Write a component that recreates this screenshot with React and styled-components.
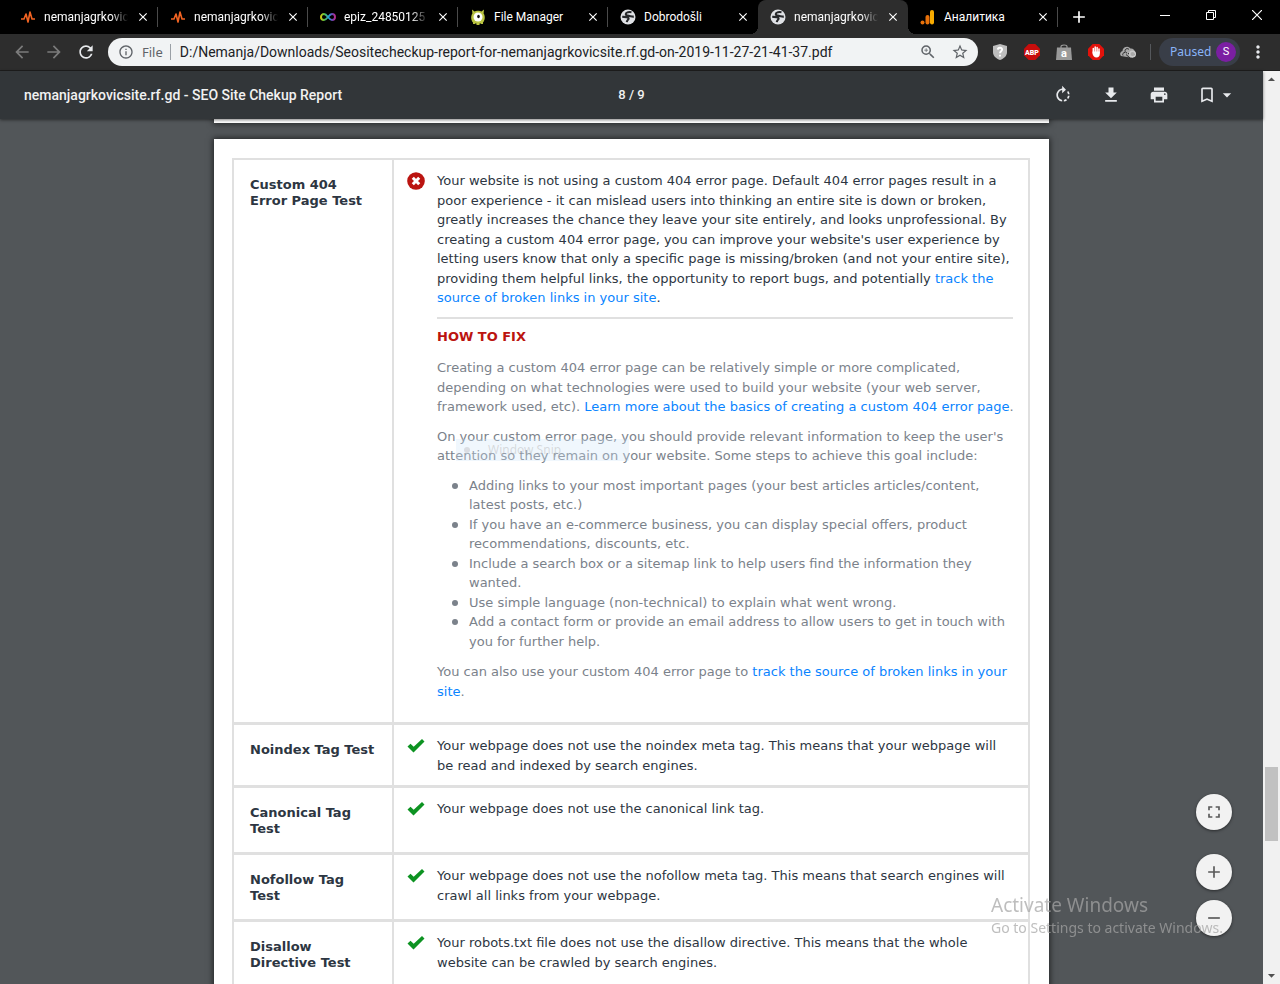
import React from 'react';
import styled, { createGlobalStyle, css } from 'styled-components';
import {
  MdArrowBack, MdArrowForward, MdRefresh, MdInfoOutline, MdZoomIn, MdStarBorder, MdRotateRight,
  MdFileDownload, MdPrint, MdBookmarkBorder, MdArrowDropDown, MdArrowDropUp, MdAdd, MdRemove,
  MdFullscreen, MdMoreVert, MdClose,
} from 'react-icons/md';

const GlobalStyle = createGlobalStyle`
  * { box-sizing: border-box; }
  body { margin: 0; background: #525659; }
  button { border: 0; padding: 0; background: none; font: inherit; color: inherit; cursor: pointer; }
`;

const uiFont = '"Noto Sans", "Open Sans", sans-serif';

const Window = styled.div`
  display: flex;
  flex-direction: column;
  height: 100vh;
  overflow: hidden;
`;

/* Tab strip */
const TabStrip = styled.header`
  display: flex;
  height: 34px;
  flex: none;
  padding-left: 8px;
  background: #000;
  color: #fff;
  font: 12px/16px Roboto, sans-serif;
`;

const Tab = styled.div`
  position: relative;
  display: flex;
  align-items: center;
  flex: 0 1 150px;
  min-width: 0;
  padding: 0 8px 0 12px;
  gap: 8px;

  &::after {
    content: '';
    position: absolute;
    right: 0;
    top: 7px;
    width: 1px;
    height: 20px;
    background: ${(p) => (p.$noDivider ? 'transparent' : '#4a4a4a')};
  }

  ${(p) => p.$active && css`
    background: #2d2d2d;
    border-radius: 8px 8px 0 0;
    &::before, &::after {
      content: '';
      position: absolute;
      top: auto;
      bottom: 0;
      width: 8px;
      height: 8px;
    }
    &::before { left: -8px; background: radial-gradient(circle at 0 0, transparent 8px, #2d2d2d 8px); }
    &::after { right: -8px; background: radial-gradient(circle at 100% 0, transparent 8px, #2d2d2d 8px); }
  `}
`;

const TabTitle = styled.button`
  flex: 1;
  min-width: 0;
  overflow: hidden;
  white-space: nowrap;
  text-align: left;
  mask-image: ${(p) => (p.$fade ? 'linear-gradient(to right, #000 80%, transparent)' : 'none')};
`;

const TabClose = styled.button`
  display: flex;
  width: 14px;
  justify-content: center;
`;

const Favicon = styled.svg`
  width: 16px;
  height: 16px;
  flex: none;
`;

const NewTab = styled.button`
  display: flex;
  align-items: center;
  justify-content: center;
  width: 42px;
`;

const WindowControls = styled.div`
  display: flex;
  height: 29px;
  margin-left: auto;
`;

const WindowButton = styled.button`
  width: 46px;
  svg { display: block; margin: 0 auto; }
`;

/* Address bar */
const Toolbar = styled.div`
  display: flex;
  align-items: center;
  flex: none;
  height: 37px;
  padding: 0 4px 0 6px;
  background: #2d2d2d;
  border-bottom: 1px solid #1e1e1e;
  font: 14px/20px ${uiFont};
`;

const ToolButton = styled.button`
  display: flex;
  align-items: center;
  justify-content: center;
  width: ${(p) => p.$width || 32}px;
  height: 28px;
  color: ${(p) => p.$color || '#e8eaed'};
`;

const Omnibox = styled.div`
  display: flex;
  align-items: center;
  flex: 1;
  min-width: 0;
  height: 28px;
  margin: 0 6px;
  padding: 0 2px 0 10px;
  border-radius: 14px;
  background: #f1f3f4;
  color: #5f6368;
`;

const Scheme = styled.label`
  margin-left: 8px;
  padding-right: 7px;
  border-right: 1px solid #9aa0a6;
  line-height: 16px;
  font-size: 13px;
`;

const UrlInput = styled.input`
  flex: 1;
  min-width: 0;
  padding: 0 0 0 9px;
  border: 0;
  outline: 0;
  background: none;
  color: #202124;
  font: 14px/20px Roboto, sans-serif;
`;

const ToolDivider = styled.span`
  width: 1px;
  height: 16px;
  margin: 0 8px 0 6px;
  background: #55585c;
`;

const ProfileChip = styled.button`
  display: flex;
  align-items: center;
  justify-content: space-between;
  width: 81px;
  height: 28px;
  padding: 0 4px 0 11px;
  border-radius: 14px;
  background: #393e48;
  color: #8ab4f8;
  font-size: 12px;
`;

const Avatar = styled.span`
  width: 20px;
  height: 20px;
  border-radius: 50%;
  background: #7b1fa2;
  color: #fff;
  font: 11px/20px Roboto, sans-serif;
  text-align: center;
`;

/* Viewer */
const Viewer = styled.div`
  display: flex;
  flex: 1;
  min-height: 0;
`;

const ViewerMain = styled.div`
  display: flex;
  flex-direction: column;
  flex: 1;
  min-width: 0;
`;

const ViewerBar = styled.div`
  z-index: 1;
  display: flex;
  align-items: center;
  flex: none;
  height: 48px;
  padding: 0 24px;
  background: #323639;
  box-shadow: 0 1px 3px rgba(0, 0, 0, 0.5);
  color: #f1f1f1;
  font: 500 13px/20px Roboto, sans-serif;
`;

const DocTitle = styled.h1`
  flex: 1;
  margin: 0;
  font-size: 14px;
  font-weight: 500;
  white-space: nowrap;
`;

const ViewerTools = styled.div`
  display: flex;
  flex: 1;
  justify-content: flex-end;
`;

const BookmarkButton = styled(ToolButton)`
  justify-content: flex-start;
  padding-left: 14px;
`;

const Pages = styled.main`
  flex: 1;
  min-height: 0;
  overflow: hidden;
  background: #525659;
`;

const Sheet = styled.section`
  position: relative;
  max-width: 835px;
  margin: 0 auto 16px;
  padding: ${(p) => (p.$end ? '4px 0 0' : '19px 19px 24px 18px')};
  background: #fff;
  box-shadow: 0 0 6px 1px rgba(0, 0, 0, 0.6);
`;

const ReportTable = styled.table`
  width: 100%;
  border: 2px solid #e0e0e0;
  border-collapse: separate;
  border-spacing: 0;
  table-layout: fixed;
  color: #2d3642;
  font: 13px/1.5 "DejaVu Sans", sans-serif;
`;

const rowLine = css`
  border-top: ${(p) => (p.$first ? '0' : '3px solid #e0e0e0')};
  vertical-align: top;
  text-align: left;
`;

const TestName = styled.th`
  ${rowLine}
  width: 160px;
  padding: 17px 14px 15px 16px;
  border-right: 2px solid #e0e0e0;
  font-weight: bold;
  line-height: 16px;
`;

const TestResult = styled.td`
  ${rowLine}
  padding: 11px 13px 10px;
`;

const ResultLayout = styled.div`
  display: flex;
  gap: 12px;
`;

const StatusIcon = styled.svg`
  flex: none;
  width: 18px;
  height: 18px;
  margin-top: 1px;
`;

const ResultBody = styled.div`
  flex: 1;
  min-width: 0;
`;

const Text = styled.p`
  margin: 0 0 ${(p) => (p.$spaced ? 10 : 0)}px;
`;

const Rule = styled.hr`
  height: 2px;
  margin: 9px 2px 8px 0;
  border: 0;
  background: #e0e0e0;
`;

const FixTitle = styled.h2`
  margin: 0 0 12px;
  color: #bb1410;
  font-size: 13px;
  line-height: inherit;
`;

const FixBody = styled.div`
  padding-bottom: 1px;
  color: #7b828b;
`;

const Steps = styled.ul`
  margin: 0 0 11px;
  padding-left: 32px;
  list-style: none;

  li { position: relative; }
  li::before {
    content: '';
    position: absolute;
    left: -17px;
    top: 7px;
    width: 6px;
    height: 6px;
    border-radius: 50%;
    background: #7b828b;
  }
`;

const Link = styled.a`
  color: #0a84ff;
  text-decoration: none;
`;

const SnipGhost = styled.div`
  position: absolute;
  left: 242px;
  top: 300px;
  width: 173px;
  height: 22px;
  padding-left: 32px;
  background: rgba(205, 230, 250, 0.3);
  color: rgba(130, 120, 120, 0.25);
  font: 12px/22px ${uiFont};

  &::before {
    content: '';
    position: absolute;
    left: 8px;
    top: 8px;
    width: 6px;
    height: 6px;
    border-radius: 50%;
    background: rgba(130, 120, 120, 0.2);
  }
`;

const ScrollBar = styled.div`
  display: flex;
  flex-direction: column;
  align-items: center;
  width: 17px;
  background: #f1f1f1;
  color: #505050;
  svg { flex: none; }
`;

const ScrollGap = styled.div`
  flex: ${(p) => p.$share} 1 0;
`;

const ScrollThumb = styled.div`
  width: 13px;
  height: 74px;
  background: #c1c1c1;
`;

const ZoomControls = styled.div`
  position: fixed;
  right: 48px;
  bottom: 48px;
  display: flex;
  flex-direction: column;
  gap: 10px;
`;

const RoundButton = styled.button`
  display: flex;
  align-items: center;
  justify-content: center;
  width: 36px;
  height: 36px;
  margin-bottom: ${(p) => (p.$apart ? 14 : 0)}px;
  border-radius: 50%;
  background: #f2f2f2;
  box-shadow: 0 1px 3px rgba(0, 0, 0, 0.5);
  color: #5a5a5a;
`;

const Watermark = styled.aside`
  position: fixed;
  right: 56px;
  bottom: 46px;
  width: 233px;
  color: rgba(165, 165, 165, 0.72);
  font: 14px/20px ${uiFont};
  white-space: nowrap;
  pointer-events: none;
`;

const WatermarkTitle = styled.div`
  font-size: 19px;
  line-height: 26px;
`;

const PulseIcon = () => (
  <Favicon viewBox="0 0 16 16" aria-hidden="true">
    <path d="M1 10h3l2-5 2 8 2-10 2 7h3" fill="none" stroke="#f26322" strokeWidth="1.6" strokeLinejoin="round" />
  </Favicon>
);

const InfinityIcon = () => (
  <Favicon viewBox="0 0 16 16" aria-hidden="true">
    <defs>
      <linearGradient id="loop" gradientUnits="userSpaceOnUse" x1="0" y1="8" x2="16" y2="8">
        <stop offset="0" stopColor="#f4d20b" />
        <stop offset=".25" stopColor="#5bbf3a" />
        <stop offset=".55" stopColor="#22a5dd" />
        <stop offset=".8" stopColor="#7a3ab0" />
        <stop offset="1" stopColor="#d02c86" />
      </linearGradient>
    </defs>
    <path d="M8 8C6 5.500 5.200 5 4 5a3 3 0 0 0 0 6c1.200 0 2-.5 4-3s2.800-3 4-3a3 3 0 0 1 0 6c-1.200 0-2-.5-4-3z" fill="none" stroke="url(#loop)" strokeWidth="1.900" />
  </Favicon>
);

const MonsterIcon = () => (
  <Favicon viewBox="0 0 16 16" aria-hidden="true">
    <path d="M2 .5l2.500 2C6 1.500 10 1.500 11.500 2.500L14 .5l-.4 4C15.500 7 15 11.500 13 13.500V15h-2v-.5H9.500V16h-3v-1.500H5V15H3v-1.500C1 11.500.5 7 2.400 4.500z" fill="#b9c341" />
    <circle cx="8" cy="8" r="4.500" fill="#fff" />
    <ellipse cx="8.500" cy="7.500" rx="1.300" ry="1.800" fill="#111" />
  </Favicon>
);

const AnalyticsIcon = () => (
  <Favicon viewBox="0 0 16 16" aria-hidden="true">
    <circle cx="2.500" cy="13.500" r="2" fill="#e8710a" />
    <rect x="5.500" y="6" width="4" height="9.500" rx="2" fill="#e8710a" />
    <rect x="10" y="1" width="4" height="14.500" rx="2" fill="#f9ab00" />
  </Favicon>
);

const GlobeIcon = () => (
  <Favicon viewBox="0 0 16 16" aria-hidden="true">
    <circle cx="8" cy="8" r="7.500" fill="#dfe1e5" />
    <path d="M11.500 3.200C9.500 2.800 6 3 5.800 5c-.1 1.600 2 1.700 3.700 2 1.500.3 2.500.8 4.300.6M2.200 7.800c2.300.2 5.300 0 6.300 1.200.9 1.300-1.500 1.700-1.700 4.200" fill="none" stroke="#26282b" strokeWidth="2.100" />
  </Favicon>
);

const TABS = [
  { title: 'nemanjagrkovics', Icon: PulseIcon, fade: true },
  { title: 'nemanjagrkovics', Icon: PulseIcon, fade: true },
  { title: 'epiz_24850125 (', Icon: InfinityIcon, fade: true },
  { title: 'File Manager', Icon: MonsterIcon },
  { title: 'Dobrodošli', Icon: GlobeIcon, noDivider: true },
  { title: 'nemanjagrkovics', Icon: GlobeIcon, fade: true, active: true },
  { title: 'Аналитика', Icon: AnalyticsIcon },
];

const EXTENSIONS = [
  {
    name: 'Site reputation',
    art: (
      <>
        <path d="M8 0l7 2v6c0 4-3 6.500-7 8-4-1.500-7-4-7-8V2z" fill="#bdbdbd" />
        <path d="M5.800 5.600C6 3 10.300 3.200 10.100 5.700 10 7.300 8 7.300 8 9.300M8 10.800v1.700" fill="none" stroke="#fff" strokeWidth="1.900" />
      </>
    ),
  },
  {
    name: 'Adblock Plus',
    art: (
      <>
        <path d="M4.700 0h6.600L16 4.700v6.600L11.300 16H4.700L0 11.300V4.700z" fill="#c70d0c" />
        <text x="8" y="10.700" textAnchor="middle" fontFamily="Roboto, sans-serif" fontWeight="900" fontSize="7" fill="#fff">ABP</text>
      </>
    ),
  },
  {
    name: 'Shopping assistant',
    art: (
      <>
        <path d="M5 5V2.500C5 .5 11 .5 11 2.500V5" fill="none" stroke="#9a9a9a" strokeWidth="1.200" />
        <path d="M1 3.500h14L16 16H0z" fill="#9a9a9a" />
        <text x="8" y="13" textAnchor="middle" fontFamily="Roboto, sans-serif" fontWeight="700" fontSize="11" fill="#fff">a</text>
      </>
    ),
  },
  {
    name: 'AdBlock',
    art: (
      <>
        <path d="M4.700 0h6.600L16 4.700v6.600L11.300 16H4.700L0 11.300V4.700z" fill="#e3120b" />
        <path d="M5.300 9V4.500M7.200 8V3M9.100 8V3.500M11 9V5" stroke="#fff" strokeWidth="1.500" strokeLinecap="round" />
        <path d="M4.600 7.500h7.200V10c0 2-1.200 3.500-3.300 3.500-2.200 0-3.900-1.700-3.900-4z" fill="#fff" />
      </>
    ),
  },
  {
    name: 'Cloud storage',
    art: (
      <>
        <path d="M1 12a3 3 0 0 1 1.500-5A4.500 4.500 0 0 1 10.500 4.500 4 4 0 0 1 15 9l-2 5z" fill="#a8a8a8" />
        <path d="M3 11.500a2 2 0 0 1 2-3M7 9a2.200 2.200 0 1 1 2-3.500M8 9l4 4.500M6 10.500l4 3.500" fill="none" stroke="#2d2d2d" strokeWidth="1" />
        <circle cx="12.500" cy="10" r="2.800" fill="none" stroke="#c8c8c8" strokeWidth="1.600" />
      </>
    ),
  },
];

const Passed = () => (
  <StatusIcon viewBox="0 0 18 18" role="img" aria-label="Passed">
    <path d="M.5 9.500l3-2.800 3.200 3L15 2l2.500 2.500L6.500 15.500z" fill="#0d9322" />
  </StatusIcon>
);

const Failed = () => (
  <StatusIcon viewBox="0 0 18 18" role="img" aria-label="Failed">
    <circle cx="9" cy="9" r="8.800" fill="#bb1410" />
    <path d="M5.800 5.800l6.400 6.400M12.200 5.800l-6.400 6.400" stroke="#fff" strokeWidth="3" />
  </StatusIcon>
);

const STEPS = [
  'Adding links to your most important pages (your best articles articles/content, latest posts, etc.)',
  'If you have an e-commerce business, you can display special offers, product recommendations, discounts, etc.',
  'Include a search box or a sitemap link to help users find the information they wanted.',
  'Use simple language (non-technical) to explain what went wrong.',
  'Add a contact form or provide an email address to allow users to get in touch with you for further help.',
];

const PASSED_TESTS = [
  ['Noindex Tag Test', 'Your webpage does not use the noindex meta tag. This means that your webpage will be read and indexed by search engines.'],
  ['Canonical Tag Test', 'Your webpage does not use the canonical link tag.'],
  ['Nofollow Tag Test', 'Your webpage does not use the nofollow meta tag. This means that search engines will crawl all links from your webpage.'],
  ['Disallow Directive Test', 'Your robots.txt file does not use the disallow directive. This means that the whole website can be crawled by search engines.'],
];

function Report() {
  return (
    <ReportTable>
      <tbody>
        <tr>
          <TestName scope="row" $first>Custom 404 Error Page Test</TestName>
          <TestResult $first>
            <ResultLayout>
              <Failed />
              <ResultBody>
                <Text>
                  Your website is not using a custom 404 error page. Default 404 error pages result in a poor
                  experience - it can mislead users into thinking an entire site is down or broken, greatly
                  increases the chance they leave your site entirely, and looks unprofessional. By creating a
                  custom 404 error page, you can improve your website's user experience by letting users know
                  that only a specific page is missing/broken (and not your entire site), providing them helpful
                  links, the opportunity to report bugs, and potentially{' '}
                  <Link href="#broken-links">track the source of broken links in your site</Link>.
                </Text>
                <Rule />
                <FixTitle>HOW TO FIX</FixTitle>
                <FixBody>
                  <Text $spaced>
                    Creating a custom 404 error page can be relatively simple or more complicated, depending on
                    what technologies were used to build your website (your web server, framework used, etc).{' '}
                    <Link href="#basics">Learn more about the basics of creating a custom 404 error page</Link>.
                  </Text>
                  <Text $spaced>
                    On your custom error page, you should provide relevant information to keep the user's
                    attention so they remain on your website. Some steps to achieve this goal include:
                  </Text>
                  <Steps>
                    {STEPS.map((step) => <li key={step}>{step}</li>)}
                  </Steps>
                  <Text $spaced>
                    You can also use your custom 404 error page to{' '}
                    <Link href="#broken-links">track the source of broken links in your site</Link>.
                  </Text>
                </FixBody>
              </ResultBody>
            </ResultLayout>
          </TestResult>
        </tr>
        {PASSED_TESTS.map(([name, result]) => (
          <tr key={name}>
            <TestName scope="row">{name}</TestName>
            <TestResult>
              <ResultLayout>
                <Passed />
                <ResultBody>{result}</ResultBody>
              </ResultLayout>
            </TestResult>
          </tr>
        ))}
      </tbody>
    </ReportTable>
  );
}

export default function App() {
  return (
    <Window>
      <GlobalStyle />
      <TabStrip>
        {TABS.map(({ title, Icon, fade, active, noDivider }, i) => (
          <Tab key={i} $active={active} $noDivider={noDivider}>
            <Icon />
            <TabTitle $fade={fade}>{title}</TabTitle>
            <TabClose aria-label="Close tab"><MdClose size={14} /></TabClose>
          </Tab>
        ))}
        <NewTab aria-label="New tab"><MdAdd size={20} /></NewTab>
        <WindowControls>
          <WindowButton aria-label="Minimize">
            <svg width="10" height="10"><path d="M0 5.500h10" stroke="#fff" /></svg>
          </WindowButton>
          <WindowButton aria-label="Restore">
            <svg width="10" height="10"><path d="M.5 2.500h7v7h-7zM2.500 2.500v-2h7v7h-2" fill="none" stroke="#fff" /></svg>
          </WindowButton>
          <WindowButton aria-label="Close">
            <svg width="10" height="10"><path d="M0 0l10 10M10 0L0 10" stroke="#fff" strokeWidth="1.200" /></svg>
          </WindowButton>
        </WindowControls>
      </TabStrip>

      <Toolbar>
        <ToolButton aria-label="Back" $color="#7b7b7b"><MdArrowBack size={20} /></ToolButton>
        <ToolButton aria-label="Forward" $color="#7b7b7b"><MdArrowForward size={20} /></ToolButton>
        <ToolButton aria-label="Reload"><MdRefresh size={20} /></ToolButton>
        <Omnibox>
          <MdInfoOutline size={16} />
          <Scheme htmlFor="url">File</Scheme>
          <UrlInput
            id="url"
            readOnly
            value="D:/Nemanja/Downloads/Seositecheckup-report-for-nemanjagrkovicsite.rf.gd-on-2019-11-27-21-41-37.pdf"
          />
          <ToolButton aria-label="Zoom" $color="#5f6368"><MdZoomIn size={18} /></ToolButton>
          <ToolButton aria-label="Bookmark this page" $color="#5f6368"><MdStarBorder size={18} /></ToolButton>
        </Omnibox>
        {EXTENSIONS.map(({ name, art }) => (
          <ToolButton key={name} aria-label={name}>
            <Favicon viewBox="0 0 16 16">{art}</Favicon>
          </ToolButton>
        ))}
        <ToolDivider />
        <ProfileChip>Paused<Avatar>S</Avatar></ProfileChip>
        <ToolButton aria-label="Menu" $width={36}><MdMoreVert size={20} /></ToolButton>
      </Toolbar>

      <Viewer>
        <ViewerMain>
          <ViewerBar>
            <DocTitle>nemanjagrkovicsite.rf.gd - SEO Site Chekup Report</DocTitle>
            <span>8 / 9</span>
            <ViewerTools>
              <ToolButton aria-label="Rotate" $width={48}><MdRotateRight size={20} /></ToolButton>
              <ToolButton aria-label="Download" $width={48}><MdFileDownload size={20} /></ToolButton>
              <ToolButton aria-label="Print" $width={48}><MdPrint size={20} /></ToolButton>
              <BookmarkButton aria-label="Bookmarks" $width={56}>
                <MdBookmarkBorder size={20} /><MdArrowDropDown size={20} />
              </BookmarkButton>
            </ViewerTools>
          </ViewerBar>
          <Pages>
            <Sheet $end />
            <Sheet>
              <Report />
              <SnipGhost>Window Snip</SnipGhost>
            </Sheet>
          </Pages>
        </ViewerMain>
        <ScrollBar aria-hidden="true">
          <MdArrowDropUp size={17} />
          <ScrollGap $share={679} />
          <ScrollThumb />
          <ScrollGap $share={126} />
          <MdArrowDropDown size={17} />
        </ScrollBar>
      </Viewer>

      <ZoomControls>
        <RoundButton aria-label="Fit to page" $apart><MdFullscreen size={20} /></RoundButton>
        <RoundButton aria-label="Zoom in"><MdAdd size={20} /></RoundButton>
        <RoundButton aria-label="Zoom out"><MdRemove size={20} /></RoundButton>
      </ZoomControls>
      <Watermark>
        <WatermarkTitle>Activate Windows</WatermarkTitle>
        Go to Settings to activate Windows.
      </Watermark>
    </Window>
  );
}
